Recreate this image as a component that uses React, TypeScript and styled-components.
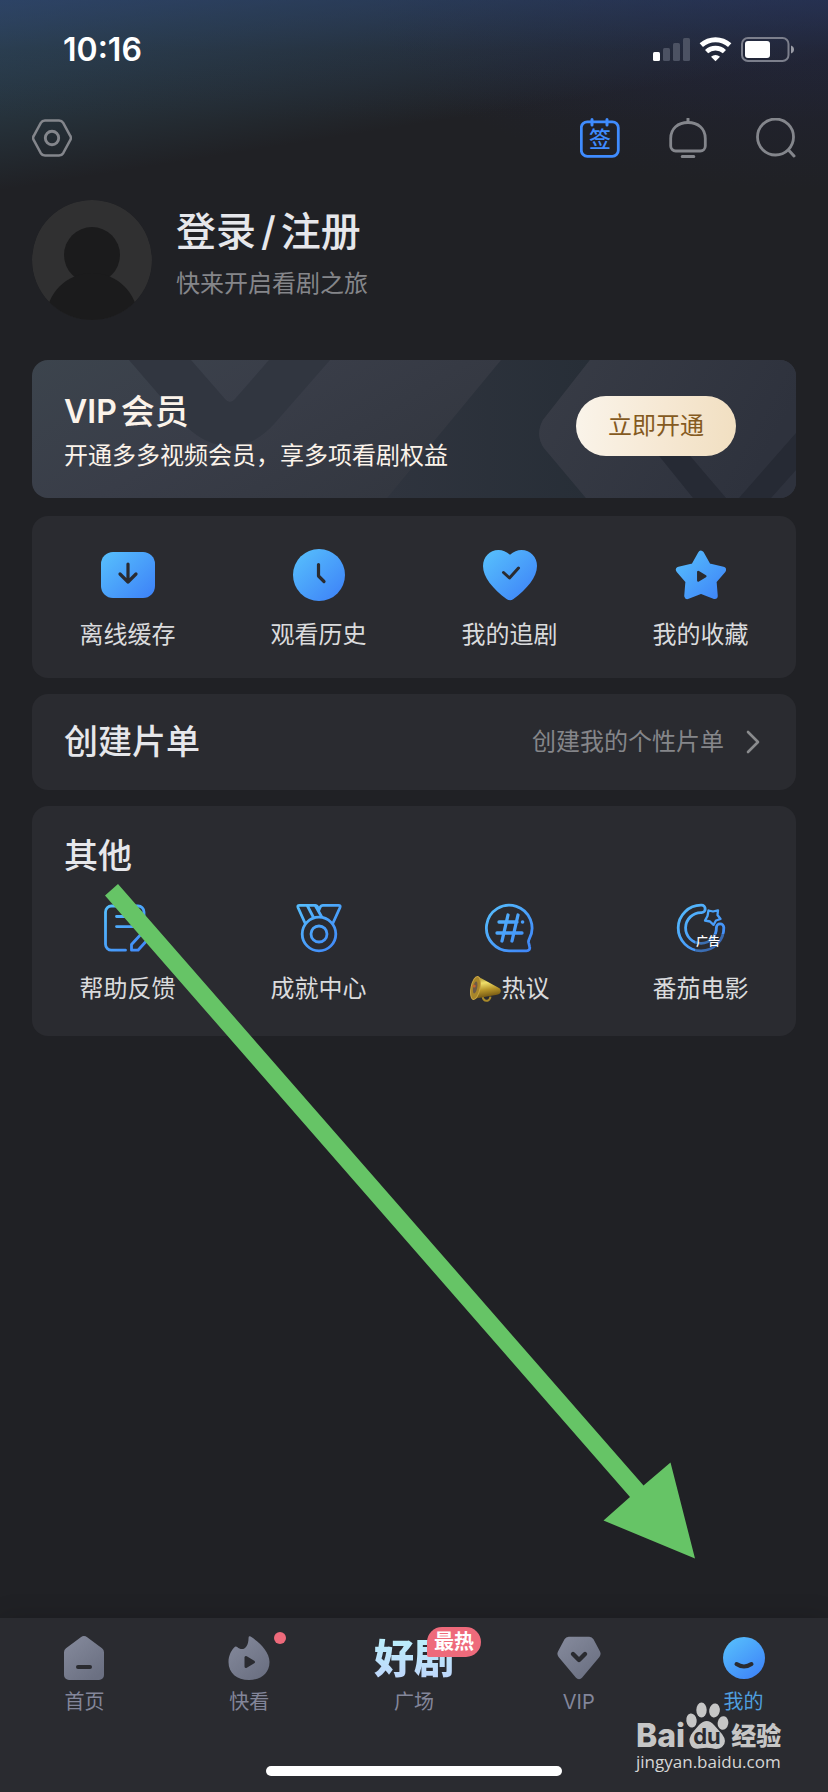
import React from 'react';
import styled, { createGlobalStyle } from 'styled-components';

const colors = {
  page: '#202125',
  card: '#2a2b30',
  title: '#e6e7eb',
  label: '#dadbdd',
  muted: '#85868a',
  navMuted: '#83869a',
  accent: '#4f9ede',
  blue: '#3f8cff',
  cream: '#fbf3ea',
  red: '#ee6a7b',
};

const GlobalStyle = createGlobalStyle`
  *, *::before, *::after { box-sizing: border-box; }
  body {
    margin: 0;
    background: ${colors.page};
    font-family: Inter, "Noto Sans CJK SC", sans-serif;
    color: ${colors.title};
  }
  h1, h2, p, ul { margin: 0; padding: 0; }
  ul { list-style: none; }
  button { font: inherit; color: inherit; background: none; border: 0; padding: 0; cursor: pointer; }
  a { color: inherit; text-decoration: none; }
  svg { display: block; }
`;

const Page = styled.div`
  position: relative;
  min-height: 100vh;
  display: flex;
  flex-direction: column;
  overflow: hidden;
  background:
    linear-gradient(180deg, rgba(40, 54, 96, 0.5) 0, rgba(36, 44, 72, 0.25) 50px, rgba(32, 33, 37, 0) 120px),
    radial-gradient(460px 190px at 100% 0, rgba(34, 38, 76, 0.45), rgba(32, 33, 37, 0)),
    linear-gradient(171deg, #32506a 0, #2c4352 50px, #27353f 105px, #202125 188px);
  background-color: ${colors.page};
`;

const StatusBar = styled.div`
  height: 98px;
  padding: 2px 34px 0 63px;
  display: flex;
  align-items: center;
  justify-content: space-between;
`;

const Clock = styled.span`
  font-size: 32px;
  line-height: 40px;
  font-weight: 600;
  color: #fff;
`;

const Toolbar = styled.header`
  height: 80px;
  padding: 0 32px;
  display: flex;
  align-items: center;
  justify-content: space-between;
`;

const ToolGroup = styled.div`
  display: flex;
  gap: 48px;
`;

const IconButton = styled.button`
  width: 40px;
  height: 40px;
`;

const Content = styled.main`
  flex: 1;
  padding: 22px 32px 40px;
`;

const Profile = styled.section`
  display: flex;
  gap: 24px;
  margin-bottom: 40px;
`;

const ProfileText = styled.div`
  padding-top: 4px;
`;

const LoginTitle = styled.h1`
  font-size: 40px;
  line-height: 56px;
  font-weight: 500;
`;

const LoginLink = styled.a`
  display: flex;
  gap: 5px;
`;

const Hint = styled.p`
  margin-top: 8px;
  font-size: 24px;
  line-height: 32px;
  color: ${colors.muted};
`;

const VipCard = styled.section`
  position: relative;
  display: flex;
  justify-content: space-between;
  align-items: flex-start;
  padding: 30px 60px 26px 32px;
  border-radius: 16px;
  overflow: hidden;
  margin-bottom: 18px;
`;

const VipArt = styled.svg`
  position: absolute;
  inset: 0;
  width: 100%;
  height: 100%;
`;

const VipText = styled.div`
  position: relative;
  color: ${colors.cream};
`;

const VipTitle = styled.h2`
  display: flex;
  gap: 4px;
  font-size: 34px;
  line-height: 44px;
  font-weight: 500;
`;

const VipLatin = styled.span`
  font-size: 32px;
  font-weight: 600;
`;

const VipDesc = styled.p`
  margin-top: 6px;
  font-size: 24px;
  line-height: 32px;
`;

const OpenButton = styled.button`
  position: relative;
  margin-top: 6px;
  width: 160px;
  height: 60px;
  border-radius: 30px;
  background: linear-gradient(95deg, #faf4ea, #f6e8d3 55%, #f1dfc1);
  color: #855a1f;
  font-size: 24px;
  line-height: 32px;
`;

const Card = styled.section`
  background: ${colors.card};
  border-radius: 16px;
  margin-bottom: 16px;
`;

const CardTitle = styled.h2`
  font-size: 34px;
  line-height: 44px;
  font-weight: 500;
`;

const OtherTitle = styled(CardTitle)`
  padding: 28px 32px 0;
`;

const Grid = styled.ul<{ $top: number; $bottom: number }>`
  display: grid;
  grid-template-columns: repeat(4, 1fr);
  padding: ${(p) => p.$top}px 0 ${(p) => p.$bottom}px;
`;

const Tile = styled.a`
  display: flex;
  flex-direction: column;
  align-items: center;
  gap: 16px;
`;

const TileLabel = styled.span`
  display: flex;
  align-items: center;
  font-size: 24px;
  line-height: 34px;
  color: ${colors.label};
`;

const CreateRow = styled.a`
  display: flex;
  align-items: center;
  justify-content: space-between;
  padding: 26px 36px 26px 32px;
`;

const CreateHint = styled.span`
  display: flex;
  align-items: center;
  gap: 22px;
  font-size: 24px;
  line-height: 32px;
  color: ${colors.muted};
`;

const Bottom = styled.footer`
  position: relative;
  background: ${colors.card};
  padding-bottom: 16px;
  box-shadow: 0 0 24px rgba(0, 0, 0, 0.16);
`;

const Nav = styled.nav`
  display: grid;
  grid-template-columns: repeat(5, 1fr);
  padding: 18px 2px 50px;
`;

const NavItem = styled.a<{ $active?: boolean }>`
  display: flex;
  flex-direction: column;
  align-items: center;
  gap: 8px;
  font-size: 20px;
  line-height: 28px;
  color: ${(p) => (p.$active ? colors.accent : colors.navMuted)};
`;

const NavIcon = styled.span`
  position: relative;
  display: flex;
  justify-content: center;
  min-width: 44px;
  height: 44px;
`;

const Dot = styled.span`
  position: absolute;
  top: -4px;
  right: -15px;
  width: 12px;
  height: 12px;
  border-radius: 50%;
  background: ${colors.red};
`;

const ArtWord = styled.span`
  height: 44px;
  font-family: "Noto Sans CJK SC", sans-serif;
  font-size: 40px;
  line-height: 40px;
  font-weight: 900;
  color: transparent;
  background: linear-gradient(180deg, #baf0fb, #bfd6fb);
  -webkit-background-clip: text;
  background-clip: text;
`;

const HotBadge = styled.span`
  position: absolute;
  top: -9px;
  right: -27px;
  width: 54px;
  height: 30px;
  border-radius: 15px 15px 15px 2px;
  background: ${colors.red};
  color: #fff;
  font-size: 20px;
  line-height: 30px;
  font-weight: 700;
  text-align: center;
`;

const HomeBar = styled.div`
  width: 296px;
  height: 10px;
  margin: 0 auto;
  border-radius: 5px;
  background: #fff;
`;

const Watermark = styled.div`
  position: absolute;
  right: 42px;
  bottom: 18px;
  width: 150px;
  color: #c6c6c6;
`;

const MarkRow = styled.div`
  display: flex;
  align-items: flex-end;
  height: 48px;
  line-height: 28px;
  font-weight: 800;
`;

const MarkLatin = styled.span`
  font-size: 32px;
`;

const MarkCjk = styled.span`
  margin-left: 2px;
  font-size: 25px;
`;

const MarkUrl = styled.div`
  font-family: "Open Sans", "Noto Sans", sans-serif;
  font-size: 17px;
  line-height: 24px;
  color: #d6d6d6;
`;

const Arrow = styled.svg`
  position: absolute;
  left: 105px;
  top: 884px;
  pointer-events: none;
`;

const GradientDefs = styled.svg`
  position: absolute;
`;

const SharedGradients = () => (
  <GradientDefs width="0" height="0" aria-hidden="true">
    <defs>
      <linearGradient id="tileBlue" gradientUnits="userSpaceOnUse" x1="8" y1="8" x2="48" y2="50">
        <stop offset="0" stopColor="#55bbfc" />
        <stop offset="1" stopColor="#3f86f8" />
      </linearGradient>
      <linearGradient id="navBlue" gradientUnits="userSpaceOnUse" x1="8" y1="4" x2="36" y2="40">
        <stop offset="0" stopColor="#55bbfc" />
        <stop offset="1" stopColor="#3f86f8" />
      </linearGradient>
      <linearGradient id="navGray" gradientUnits="userSpaceOnUse" x1="6" y1="4" x2="36" y2="40">
        <stop offset="0" stopColor="#83889a" />
        <stop offset="1" stopColor="#6b7082" />
      </linearGradient>
    </defs>
  </GradientDefs>
);

const StatusIcons = () => (
  <svg width="141" height="26" viewBox="0 0 141 26" aria-hidden="true">
    <rect x="0" y="15" width="7" height="9" rx="1.5" fill="#fff" />
    <rect x="10" y="11" width="7" height="13" rx="1.5" fill="#4c5263" />
    <rect x="20" y="6" width="7" height="18" rx="1.5" fill="#4c5263" />
    <rect x="30" y="1" width="7" height="23" rx="1.5" fill="#4c5263" />
    <g fill="none" stroke="#fff">
      <path d="M48.3 8.2a21.3 21.3 0 0 1 28.4 0" strokeWidth="5" />
      <path d="M53.6 14.6a13 13 0 0 1 17.8 0" strokeWidth="4.6" />
    </g>
    <path d="M58 19.7a7 7 0 0 1 9 0L62.500 24.300Z" fill="#fff" />
    <rect x="89" y="1" width="46.500" height="23" rx="6" fill="none" stroke="#7c7f8c" strokeWidth="2" />
    <rect x="92" y="4" width="25" height="17" rx="3" fill="#fff" />
    <path d="M138 8.500c4 1.300 4 6.700 0 8Z" fill="#9a9ca6" />
  </svg>
);

const SettingsIcon = () => (
  <svg width="40" height="40" viewBox="0 0 40 40" fill="none" stroke="#84868c" strokeWidth="2.500">
    <path d="M13 2.500H27a5 5 0 0 1 4.200 2.300L38.200 17.800a4 4 0 0 1 0 4.400L31.200 35.200a5 5 0 0 1-4.200 2.300H13a5 5 0 0 1-4.200-2.300L1.800 22.200a4 4 0 0 1 0-4.400L8.800 4.800A5 5 0 0 1 13 2.500Z" />
    <circle cx="20" cy="20" r="6.700" strokeWidth="2.900" />
  </svg>
);

const SignIcon = () => (
  <svg width="40" height="40" viewBox="0 0 40 40">
    <g fill="none" stroke={colors.blue} strokeLinecap="round">
      <rect x="1.300" y="3.800" width="37" height="34.500" rx="6" strokeWidth="2.800" />
      <path d="M12 1.500V7M27 1.500V7" strokeWidth="3" />
    </g>
    <text x="20" y="29" textAnchor="middle" fontSize="22" fontWeight="500" fill={colors.blue} fontFamily="Noto Sans CJK SC, sans-serif">签</text>
  </svg>
);

const BellIcon = () => (
  <svg width="40" height="40" viewBox="0 0 40 40" fill="none" stroke="#84868c" strokeWidth="2.800">
    <path d="M2.700 20.500C2.700 10.500 10 4.500 20 4.500S37.300 10.500 37.300 20.500V28a5 5 0 0 1-5 5H7.700a5 5 0 0 1-5-5Z" />
    <path d="M20 .8V4M14.200 38.500h11.600" strokeWidth="3" strokeLinecap="round" />
  </svg>
);

const SearchIcon = () => (
  <svg width="40" height="40" viewBox="0 0 40 40" fill="none" stroke="#84868c" strokeWidth="2.800">
    <circle cx="19.500" cy="19" r="18" />
    <path d="M32.500 32l5.500 6" strokeWidth="3" strokeLinecap="round" />
  </svg>
);

const Avatar = () => (
  <svg width="120" height="120" viewBox="0 0 120 120" role="img" aria-label="头像">
    <defs>
      <clipPath id="avatarClip"><circle cx="60" cy="60" r="60" /></clipPath>
    </defs>
    <g clipPath="url(#avatarClip)">
      <circle cx="60" cy="60" r="60" fill="#303031" />
      <circle cx="60" cy="55" r="28" fill="#1b1b1c" />
      <circle cx="60" cy="119" r="46" fill="#1b1b1c" />
    </g>
  </svg>
);

const VipPattern = () => (
  <VipArt viewBox="0 0 764 138" preserveAspectRatio="none" aria-hidden="true">
    <defs>
      <linearGradient id="vipBase" x1="0" y1="0" x2="1" y2="0.300">
        <stop offset="0" stopColor="#3c444d" />
        <stop offset="0.350" stopColor="#393d48" />
        <stop offset="0.700" stopColor="#333740" />
        <stop offset="1" stopColor="#2d313c" />
      </linearGradient>
      <linearGradient id="vipBand" x1="0" y1="0" x2="1" y2="0">
        <stop offset="0" stopColor="#2f343e" />
        <stop offset="1" stopColor="#272e37" />
      </linearGradient>
      <linearGradient id="vipRight" x1="0" y1="0" x2="1" y2="0.300">
        <stop offset="0" stopColor="#383c46" />
        <stop offset="1" stopColor="#2e323d" />
      </linearGradient>
    </defs>
    <rect width="764" height="138" fill="url(#vipBase)" />
    <path d="M97 0L154 66Q174 86 198 86T242 64L298 0H237L203 39Q198 45 193 39L159 0Z" fill="#313640" />
    <path d="M469 0H558L511 60Q503 75 512 88L554 138H355Z" fill="url(#vipBand)" />
    <path d="M558 0H764V138H554L512 88Q503 75 511 60Z" fill="url(#vipRight)" />
    <path d="M590 50L661 138H694L619 50ZM707 138L764 73V110L739 138Z" fill="#262a34" />
  </VipArt>
);

const TileSvg = ({ children }: { children: React.ReactNode }) => (
  <svg width="56" height="56" viewBox="0 0 56 56" fill="none" strokeLinecap="round" strokeLinejoin="round" aria-hidden="true">
    {children}
  </svg>
);

const DownloadIcon = () => (
  <TileSvg>
    <rect x="1" y="6" width="54" height="46" rx="12" fill="url(#tileBlue)" />
    <path d="M28 18V36M20 28l8 8 8-8" stroke={colors.card} strokeWidth="3.200" />
  </TileSvg>
);

const HistoryIcon = () => (
  <TileSvg>
    <circle cx="28" cy="29" r="26" fill="url(#tileBlue)" />
    <path d="M27.500 18.500V30l5.500 5.500" stroke={colors.card} strokeWidth="3.200" />
  </TileSvg>
);

const HeartIcon = () => (
  <TileSvg>
    <path d="M28 8.800C24.500 5.500 20.500 4 16.500 4C7.500 4 1 11 1 20C1 31 11 43 24.500 53C27 54.700 29 54.700 31.500 53C45 43 55 31 55 20C55 11 48.500 4 39.500 4C35.500 4 31.500 5.500 28 8.800Z" fill="url(#tileBlue)" />
    <path d="M21.500 26.500l6 5.500 9-10" stroke={colors.card} strokeWidth="3" />
  </TileSvg>
);

const StarIcon = () => (
  <TileSvg>
    <path d="M28 8L35 20.500L49.800 23.800L40.300 35L41.500 49.800L28 44.500L14.500 49.800L15.700 35L6.200 23.800L21 20.500Z" fill="url(#tileBlue)" stroke="url(#tileBlue)" strokeWidth="6.500" />
    <path d="M25.300 26v8.500l7-4.250Z" fill={colors.card} stroke={colors.card} strokeWidth="2.500" />
  </TileSvg>
);

const FeedbackIcon = () => (
  <TileSvg>
    <g stroke="url(#tileBlue)" strokeWidth="2.800">
      <path d="M25.500 50.200H11.500a6 6 0 0 1-6-6V12a6 6 0 0 1 6-6H38a6 6 0 0 1 6 6v10" />
      <path d="M16.500 16.500H34M16.500 26.600H34" />
      <path d="M31.500 50.200V44.500L44 31l6 6L38 50.200Z" />
    </g>
  </TileSvg>
);

const MedalIcon = () => (
  <TileSvg>
    <g stroke="url(#tileBlue)" strokeWidth="2.800">
      <circle cx="28" cy="34" r="16.800" />
      <circle cx="28" cy="34" r="8" />
      <path d="M14 23L7 7.500Q6.200 5.300 8.500 5.300H24Q26 5.300 27 7.500L28 10L29 7.500Q30 5.300 32 5.300H47.500Q49.800 5.300 49 7.500L42 23" />
      <path d="M16.500 6L22.500 17.500M24.500 6L30.500 16.500" />
    </g>
  </TileSvg>
);

const TopicIcon = () => (
  <TileSvg>
    <g stroke="url(#tileBlue)" strokeWidth="2.800">
      <path d="M28 50.800H44.500c2.500 0 3.700-1.800 3.100-4l-1-4.300c-.3-1.500 0-2.400.7-3.700A22.800 22.800 0 1 0 28 50.800Z" />
      <path d="M26 15L20 41M36 15L30 41M17 22H35M15 33H40" strokeWidth="3.300" />
      <path d="M40.500 22h.1" strokeWidth="3.500" />
    </g>
  </TileSvg>
);

const MoonIcon = () => (
  <TileSvg>
    <g stroke="url(#tileBlue)" strokeWidth="2.800">
      <path d="M28.500 5.200A22.800 22.800 0 1 0 50.800 27.500a3.700 3.700 0 0 0-7.400 0A15.400 15.400 0 1 1 28.500 12.600a3.700 3.700 0 0 0 0-7.400Z" />
      <path d="M35.500 10.500L40 11.500L45 10.300L44.500 15L47.500 19L43 20.500L40.500 24.800L37 21.500L32 20.500L34.500 16Z" fill={colors.card} strokeWidth="2.300" />
    </g>
    <rect x="22" y="34" width="32" height="20" fill={colors.card} opacity="0.350" />
    <text x="35" y="46" textAnchor="middle" fontSize="12" fontWeight="500" fill="#fff" fontFamily="Noto Sans CJK SC, sans-serif">广告</text>
  </TileSvg>
);

const MegaphoneIcon = () => (
  <svg width="32" height="28" viewBox="0 0 32 28" aria-hidden="true">
    <defs>
      <linearGradient id="horn" x1="0" y1="0" x2="0.200" y2="1">
        <stop offset="0" stopColor="#8d7418" />
        <stop offset="0.350" stopColor="#f0df6a" />
        <stop offset="0.650" stopColor="#b8962a" />
        <stop offset="1" stopColor="#6f5312" />
      </linearGradient>
    </defs>
    <path d="M12.500 21.500q1 5 5 4.200 2.500-.8 3-4" fill="none" stroke="#a98a2a" strokeWidth="2" />
    <path d="M8 1.500L29 13q2.500 1.500 1.500 4.500-.8 2-3.500 2.200L3 24Z" fill="url(#horn)" />
    <ellipse cx="5.500" cy="13" rx="4.500" ry="11.700" transform="rotate(11 5.500 13)" fill="#a8862a" stroke="#c9a544" />
    <ellipse cx="5.200" cy="12.500" rx="2" ry="6" transform="rotate(11 5.200 12.500)" fill="#6d5a48" />
    <circle cx="4.200" cy="11" r="1.500" fill="#c8642c" />
  </svg>
);

const ChevronIcon = () => (
  <svg width="14" height="24" viewBox="0 0 14 24" fill="none" stroke="#8a8b8d" strokeWidth="2.600" strokeLinecap="round" strokeLinejoin="round" aria-hidden="true">
    <path d="M2 2l10 10L2 22" />
  </svg>
);

const NavSvg = ({ children }: { children: React.ReactNode }) => (
  <svg width="44" height="44" viewBox="0 0 44 44" fill="none" strokeLinecap="round" strokeLinejoin="round" aria-hidden="true">
    {children}
  </svg>
);

const HomeIcon = () => (
  <NavSvg>
    <path d="M18.800 1.200a5.500 5.500 0 0 1 6.400 0L40 12.300a5 5 0 0 1 2 4.200V39a5 5 0 0 1-5 5H7a5 5 0 0 1-5-5V16.500a5 5 0 0 1 2-4.200Z" fill="url(#navGray)" />
    <path d="M16 31H28" stroke={colors.card} strokeWidth="4" />
  </NavSvg>
);

const FlameIcon = () => (
  <NavSvg>
    <path d="M23.600.6C33 6.500 42.500 16 42.500 26C42.500 37 34 44 22 44S1.500 37 1.500 26C1.500 19.500 4.500 14 8 10.800Q9 10 10.200 11C15 15.500 21.500 13 21.600 1.500Q21.800-.4 23.600.6Z" fill="url(#navGray)" />
    <path d="M19 21.500v9l7.500-4.500Z" fill={colors.card} stroke={colors.card} strokeWidth="3" />
  </NavSvg>
);

const GemIcon = () => (
  <NavSvg>
    <path d="M12 .7H32a5 5 0 0 1 4.500 2.500L43 15.500a5 5 0 0 1-.6 5.400L25 41.800a4 4 0 0 1-6 0L1.600 20.900A5 5 0 0 1 1 15.500L7.500 3.200A5 5 0 0 1 12 .7Z" fill="url(#navGray)" />
    <path d="M16 18l6 6 6-6" stroke={colors.card} strokeWidth="4.400" />
  </NavSvg>
);

const SmileIcon = () => (
  <NavSvg>
    <circle cx="22" cy="22" r="21" fill="url(#navBlue)" />
    <path d="M14.500 28q7.500 5 15 0" stroke={colors.card} strokeWidth="4" />
  </NavSvg>
);

const PawIcon = () => (
  <svg width="44" height="48" viewBox="0 0 44 48" aria-hidden="true">
    <g fill="#c6c6c6">
      <ellipse cx="6.500" cy="18.500" rx="5.200" ry="7" transform="rotate(-8 6.500 18.500)" />
      <ellipse cx="16.500" cy="8" rx="5.200" ry="7.500" />
      <ellipse cx="29.500" cy="8.500" rx="5.300" ry="7" transform="rotate(10 29.500 8.500)" />
      <ellipse cx="38" cy="21" rx="5.300" ry="6.800" transform="rotate(10 38 21)" />
      <path d="M14 23Q22 15 29 23L37 32Q43 40 37 45Q33 48 27 46.300Q21.500 45 16 46.300Q9 48 6 43.500Q2 37 8 30Z" />
    </g>
    <text x="22" y="42" textAnchor="middle" fontSize="22" fontWeight="700" fill={colors.card} fontFamily="Inter, sans-serif">du</text>
  </svg>
);

const quickActions = [
  { label: '离线缓存', Icon: DownloadIcon },
  { label: '观看历史', Icon: HistoryIcon },
  { label: '我的追剧', Icon: HeartIcon },
  { label: '我的收藏', Icon: StarIcon },
];

const otherActions = [
  { label: '帮助反馈', Icon: FeedbackIcon },
  { label: '成就中心', Icon: MedalIcon },
  { label: '热议', Icon: TopicIcon, horn: true },
  { label: '番茄电影', Icon: MoonIcon },
];

type Action = { label: string; Icon: () => React.ReactElement; horn?: boolean };

const ActionGrid = ({ items, top, bottom }: { items: Action[]; top: number; bottom: number }) => (
  <Grid $top={top} $bottom={bottom}>
    {items.map(({ label, Icon, horn }) => (
      <li key={label}>
        <Tile href="#">
          <Icon />
          <TileLabel>
            {horn && <MegaphoneIcon />}
            {label}
          </TileLabel>
        </Tile>
      </li>
    ))}
  </Grid>
);

export default function App() {
  return (
    <Page>
      <GlobalStyle />
      <SharedGradients />
      <StatusBar>
        <Clock>10:16</Clock>
        <StatusIcons />
      </StatusBar>
      <Toolbar>
        <IconButton aria-label="设置"><SettingsIcon /></IconButton>
        <ToolGroup>
          <IconButton aria-label="签到"><SignIcon /></IconButton>
          <IconButton aria-label="消息"><BellIcon /></IconButton>
          <IconButton aria-label="搜索"><SearchIcon /></IconButton>
        </ToolGroup>
      </Toolbar>
      <Content>
        <Profile>
          <Avatar />
          <ProfileText>
            <LoginTitle>
              <LoginLink href="#">
                <span>登录</span>
                <span>/</span>
                <span>注册</span>
              </LoginLink>
            </LoginTitle>
            <Hint>快来开启看剧之旅</Hint>
          </ProfileText>
        </Profile>
        <VipCard>
          <VipPattern />
          <VipText>
            <VipTitle>
              <VipLatin>VIP</VipLatin>
              <span>会员</span>
            </VipTitle>
            <VipDesc>开通多多视频会员，享多项看剧权益</VipDesc>
          </VipText>
          <OpenButton>立即开通</OpenButton>
        </VipCard>
        <Card>
          <ActionGrid items={quickActions} top={30} bottom={26} />
        </Card>
        <Card>
          <CreateRow href="#">
            <CardTitle>创建片单</CardTitle>
            <CreateHint>
              创建我的个性片单
              <ChevronIcon />
            </CreateHint>
          </CreateRow>
        </Card>
        <Card>
          <OtherTitle>其他</OtherTitle>
          <ActionGrid items={otherActions} top={22} bottom={30} />
        </Card>
      </Content>
      <Bottom>
        <Nav>
          <NavItem href="#">
            <NavIcon><HomeIcon /></NavIcon>
            首页
          </NavItem>
          <NavItem href="#">
            <NavIcon><FlameIcon /><Dot /></NavIcon>
            快看
          </NavItem>
          <NavItem href="#">
            <NavIcon>
              <ArtWord>好剧</ArtWord>
              <HotBadge>最热</HotBadge>
            </NavIcon>
            广场
          </NavItem>
          <NavItem href="#">
            <NavIcon><GemIcon /></NavIcon>
            VIP
          </NavItem>
          <NavItem href="#" $active>
            <NavIcon><SmileIcon /></NavIcon>
            我的
          </NavItem>
        </Nav>
        <HomeBar />
        <Watermark>
          <MarkRow>
            <MarkLatin>Bai</MarkLatin>
            <PawIcon />
            <MarkCjk>经验</MarkCjk>
          </MarkRow>
          <MarkUrl>jingyan.baidu.com</MarkUrl>
        </Watermark>
      </Bottom>
      <Arrow width="591" height="675" viewBox="0 0 591 675" aria-hidden="true">
        <path d="M13 0L538.500 601.500L565.500 578.500L590 674.500L498.500 636.500L525 613L0 11.500Z" fill="#66c466" />
      </Arrow>
    </Page>
  );
}
